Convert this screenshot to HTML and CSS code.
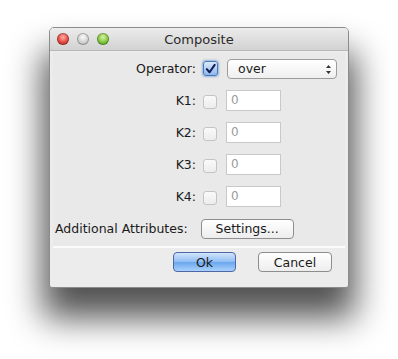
FILE: index.html
```html
<!DOCTYPE html>
<html>
<head>
<meta charset="utf-8">
<link rel="stylesheet" href="styles.css">
</head>
<body>
<div class="stage">
<div class="shadow"></div>
<div class="window">
  <div class="titlebar">
    <div class="lights">
      <span class="light red"></span>
      <span class="light gray"></span>
      <span class="light green"></span>
    </div>
    <div class="title">Composite</div>
  </div>
  <div class="content">
    <div class="panel">
      <div class="label">Operator:</div>
      <div class="controls">
        <span class="check checked">
          <svg width="14" height="14" viewBox="0 0 14 14"><path d="M3 7.2 L6 10.5 L11.5 2.5" fill="none" stroke="#0d1f55" stroke-width="2.2" stroke-linecap="round" stroke-linejoin="round"/></svg>
        </span>
        <span class="combo">over
          <svg class="arrows" width="7" height="11" viewBox="0 0 7 11"><path d="M3.5 1 L6 4 L1 4 Z M3.5 10 L6 7 L1 7 Z" fill="#333"/></svg>
        </span>
      </div>
      <div class="label">K1:</div>
      <div class="controls"><span class="check"></span><span class="field">0</span></div>
      <div class="label">K2:</div>
      <div class="controls"><span class="check"></span><span class="field">0</span></div>
      <div class="label">K3:</div>
      <div class="controls"><span class="check"></span><span class="field">0</span></div>
      <div class="label">K4:</div>
      <div class="controls"><span class="check"></span><span class="field">0</span></div>
      <div class="attrs">
        <span class="attrs-label">Additional Attributes:</span>
        <span class="btn settings">Settings...</span>
      </div>
    </div>
    <div class="buttons">
      <span class="btn ok">Ok</span>
      <span class="btn cancel">Cancel</span>
    </div>
  </div>
</div>
</div>
</body>
</html>
```
FILE: styles.css
```css
html, body {
  margin: 0;
  padding: 0;
  background: #ffffff;
}
body {
  font-family: "DejaVu Sans", "Liberation Sans", sans-serif;
  font-size: 12px;
  color: #1a1a1a;
}
.stage {
  position: relative;
  width: 398px;
  height: 359px;
  padding: 27px 0 0 49px;
  box-sizing: border-box;
  overflow: hidden;
}
.shadow {
  position: absolute;
  left: 43px;
  top: 52px;
  width: 312px;
  height: 266px;
  background: rgba(0,0,0,0.68);
  filter: blur(17px);
}
.window {
  position: relative;
  width: 298px;
  height: 259px;
  border: 1px solid #8c8c8c;
  border-radius: 5px 5px 3px 3px;
  background: #ececec;
  display: flex;
  flex-direction: column;
  overflow: hidden;
}
.titlebar {
  height: 22px;
  background: linear-gradient(#ececec, #d2d2d2);
  border-bottom: 1px solid #b8b8b8;
  display: flex;
  align-items: center;
  position: relative;
}
.lights {
  display: flex;
  gap: 8px;
  padding-left: 7px;
}
.light {
  width: 12px;
  height: 12px;
  border-radius: 50%;
  box-shadow: inset 0 0 0 1px rgba(0,0,0,0.25);
}
.red { background: radial-gradient(circle at 50% 35%, #ffb0a8, #e0463c 55%, #a82419); }
.gray { background: radial-gradient(circle at 50% 35%, #fafafa, #cfcfcf 55%, #a9a9a9); }
.green { background: radial-gradient(circle at 50% 35%, #d8f4a2, #7cc23c 55%, #4b8b1c); }
.title {
  position: absolute;
  left: 0;
  right: 0;
  text-align: center;
  font-size: 13px;
  color: #2a2a2a;
  top: 4px;
}
.content {
  flex: 1;
  padding: 2px 3px 0 3px;
  display: flex;
  flex-direction: column;
}
.panel {
  background: #e9e9e9;
  border-bottom: 2px solid #fbfbfb;
  display: grid;
  grid-template-columns: 143px auto;
  column-gap: 6px;
  row-gap: 11px;
  padding: 5px 0 7px 0;
  align-items: center;
}
.label {
  text-align: right;
  font-size: 12.5px;
  height: 21px;
  line-height: 21px;
}
.controls {
  display: flex;
  align-items: center;
  height: 21px;
  gap: 9px;
}
.attrs {
  grid-column: 1 / 3;
  display: flex;
  align-items: center;
  height: 21px;
  padding-left: 2px;
  gap: 13px;
  font-size: 12.5px;
}
.check {
  width: 12px;
  height: 12px;
  border: 1px solid #c4c4c4;
  border-radius: 3px;
  background: linear-gradient(#fafafa, #ececec);
  margin-top: 3px;
  margin-left: 1px;
  display: flex;
  align-items: center;
  justify-content: center;
}
.check.checked {
  width: 13px;
  height: 13px;
  margin-top: 0;
  border: 1px solid #4a78b8;
  background: linear-gradient(#dbe9fb, #8fb6ea);
  box-shadow: 0 0 2px 1px rgba(90,140,210,0.6);
}
.field {
  height: 19px;
  border: 1px solid #c9c9c9;
  background: #ffffff;
  color: #9a9a9a;
  line-height: 19px;
  padding-left: 4px;
  width: 49px;
}
.combo {
  width: 94px;
  height: 18px;
  border: 1px solid #9c9c9c;
  border-radius: 4px;
  background: linear-gradient(#ffffff, #efefef);
  padding-left: 10px;
  padding-right: 4px;
  line-height: 18px;
  font-size: 12.5px;
  display: flex;
  justify-content: space-between;
  align-items: center;
}
.arrows {
  margin-top: 1px;
}
.btn {
  display: inline-flex;
  align-items: center;
  justify-content: center;
  height: 18px;
  border: 1px solid #8e8e8e;
  border-radius: 4px;
  background: linear-gradient(#ffffff, #ededed);
  font-size: 12.5px;
}
.settings {
  width: 91px;
}
.buttons {
  display: flex;
  justify-content: flex-end;
  padding: 4px 13px 0 0;
  gap: 22px;
}
.ok {
  width: 61px;
  border-color: #4f67a6;
  background: linear-gradient(#d1e4fb, #8fbdf3 50%, #6aa6ee 51%, #a9d2fb);
}
.cancel {
  width: 72px;
}
```
